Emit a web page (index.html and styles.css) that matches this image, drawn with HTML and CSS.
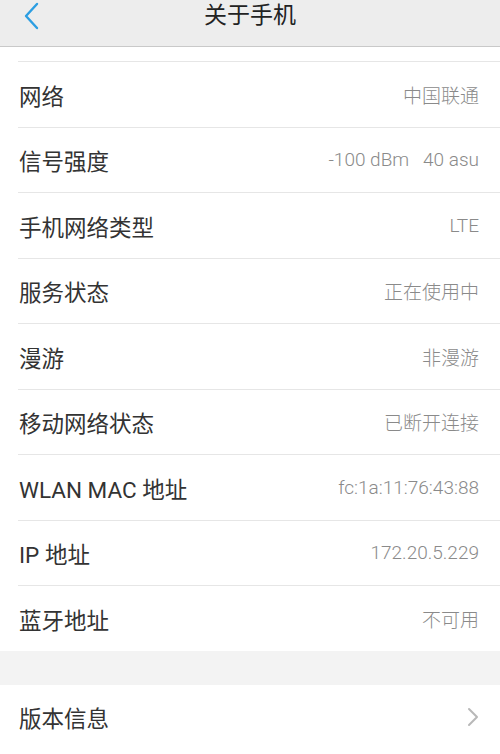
FILE: index.html
```html
<!DOCTYPE html>
<html lang="zh">
<head>
<meta charset="utf-8">
<title>关于手机</title>
<link rel="stylesheet" href="styles.css">
</head>
<body>
<header class="topbar">
  <svg class="back" viewBox="0 0 16 28" width="16" height="28"><path d="M14 2 L3 14 L14 26" fill="none" stroke="#2c9ee2" stroke-width="2.4" stroke-linecap="round" stroke-linejoin="round"/></svg>
  <h1 class="title">关于手机</h1>
</header>
<div class="scroll-edge"></div>
<ul class="group">
  <li class="row"><span class="label">网络</span><span class="value">中国联通</span></li>
  <li class="row"><span class="label">信号强度</span><span class="value">-100 dBm&nbsp;&nbsp;&nbsp;40 asu</span></li>
  <li class="row"><span class="label">手机网络类型</span><span class="value">LTE</span></li>
  <li class="row"><span class="label">服务状态</span><span class="value">正在使用中</span></li>
  <li class="row"><span class="label">漫游</span><span class="value">非漫游</span></li>
  <li class="row"><span class="label">移动网络状态</span><span class="value">已断开连接</span></li>
  <li class="row"><span class="label">WLAN MAC 地址</span><span class="value">fc:1a:11:76:43:88</span></li>
  <li class="row"><span class="label">IP 地址</span><span class="value">172.20.5.229</span></li>
  <li class="row"><span class="label">蓝牙地址</span><span class="value">不可用</span></li>
</ul>
<div class="gap"></div>
<ul class="group second">
  <li class="row"><span class="label">版本信息</span><svg class="chev" viewBox="0 0 12 20" width="12" height="20"><path d="M2 2 L10 10 L2 18" fill="none" stroke="#b8b8b8" stroke-width="2" stroke-linecap="round" stroke-linejoin="round"/></svg></li>
</ul>
</body>
</html>
```
FILE: styles.css
```css
html, body {
  margin: 0;
  padding: 0;
  background: #ffffff;
  font-family: "Liberation Sans", "Noto Sans CJK SC", sans-serif;
  overflow: hidden;
}
.topbar {
  height: 46px;
  background: #ededed;
  border-bottom: 1px solid #c9c9c9;
  display: flex;
  align-items: flex-start;
  justify-content: center;
  position: relative;
}
.back {
  position: absolute;
  left: 23px;
  top: 2px;
}
.title {
  margin: 0;
  font-weight: normal;
  font-size: 23px;
  line-height: 31px;
  color: #222;
}
.scroll-edge {
  height: 14px;
  margin-left: 18px;
  border-bottom: 1px solid #e6e6e6;
}
.group {
  list-style: none;
  margin: 0;
  padding: 0 0 0 18px;
  background: #fff;
}
.row {
  height: 64.5px;
  display: flex;
  align-items: center;
  justify-content: space-between;
  padding-right: 21px;
  border-bottom: 1px solid #e6e6e6;
}
.group .row:last-child {
  border-bottom: none;
}
.label {
  font-family: "Roboto", "Noto Sans CJK SC", sans-serif;
  font-size: 22.5px;
  color: #333;
  margin-left: 1px;
  padding-top: 1px;
}
.value {
  font-family: "Roboto", "Noto Sans CJK SC", sans-serif;
  font-weight: 300;
  font-size: 19px;
  color: #8a8a8a;
}
.gap {
  height: 34px;
  background: #f3f3f3;
}
.second .row {
  border-bottom: 1px solid #e6e6e6;
}
```
